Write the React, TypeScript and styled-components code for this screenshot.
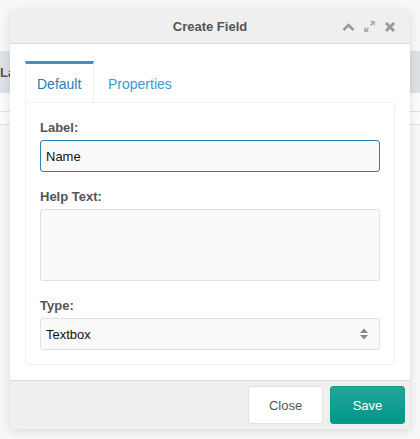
import React from 'react'
import styled, { createGlobalStyle } from 'styled-components'

const GlobalStyle = createGlobalStyle`
  html, body {
    margin: 0;
    padding: 0;
    background: #f7f7f7;
    font-family: "Liberation Sans", Arial, sans-serif;
  }
  * { box-sizing: border-box; }
`

const Page = styled.div`
  position: relative;
  width: 420px;
  height: 439px;
  overflow: hidden;
  background: #f7f7f7;
`

const BackTable = styled.div`
  padding-top: 51px;
  display: flex;
  flex-direction: column;
`

const BackHeader = styled.div`
  height: 42px;
  background: #dde1e5;
  display: flex;
  align-items: center;
  font-size: 13px;
  font-weight: bold;
  color: #555;
`

const BackRow = styled.div<{ $h: number }>`
  height: ${(p) => p.$h}px;
  background: #fbfbfb;
  border-bottom: 1px solid #e2e2e2;
`

const Dialog = styled.div`
  position: absolute;
  left: 10px;
  top: 10px;
  width: 400px;
  background: #fff;
  border-radius: 3px;
  box-shadow: 0 2px 10px rgba(0, 0, 0, 0.12);
  display: flex;
  flex-direction: column;
  overflow: hidden;
`

const Header = styled.div`
  height: 34px;
  flex: none;
  background: #efefef;
  border-bottom: 1px solid #dcdcdc;
  position: relative;
  display: flex;
  align-items: center;
  justify-content: center;
`

const Title = styled.div`
  font-size: 13px;
  font-weight: bold;
  color: #555;
`

const HeaderIcons = styled.div`
  position: absolute;
  right: 14px;
  top: 0;
  height: 100%;
  display: flex;
  align-items: center;
  gap: 8px;
`

const Body = styled.div`
  padding: 17px 15px 15px 15px;
  display: flex;
  flex-direction: column;
`

const Tabs = styled.div`
  display: flex;
  height: 41px;
`

const Tab = styled.div<{ $active?: boolean }>`
  display: flex;
  align-items: center;
  padding-top: 2px;
  font-size: 14px;
  color: ${(p) => (p.$active ? '#2b7fb6' : '#3c9ad3')};
  background: ${(p) => (p.$active ? '#fff' : 'transparent')};
  border-top: 3px solid ${(p) => (p.$active ? '#3996c8' : 'transparent')};
  border-left: 1px solid ${(p) => (p.$active ? '#f0f0f0' : 'transparent')};
  border-right: 1px solid ${(p) => (p.$active ? '#f0f0f0' : 'transparent')};
  width: ${(p) => (p.$active ? '69px' : 'auto')};
  padding-left: ${(p) => (p.$active ? '11px' : '13px')};
`

const Panel = styled.div`
  border: 1px solid #f0f0f0;
  border-radius: 0 4px 4px 4px;
  padding: 17px 14px 14px 14px;
  display: flex;
  flex-direction: column;
`

const FieldLabel = styled.div<{ $top?: number }>`
  font-size: 13px;
  line-height: 15px;
  font-weight: bold;
  color: #555;
  margin-top: ${(p) => p.$top ?? 0}px;
  margin-bottom: 5px;
`

const TextInput = styled.div<{ $focus?: boolean }>`
  height: 32px;
  background: #fafafa;
  border: 1px solid ${(p) => (p.$focus ? '#2f82b8' : '#e0e0e0')};
  border-radius: 3px;
  font-size: 13px;
  color: #111;
  display: flex;
  align-items: center;
  padding-left: 5px;
`

const TextArea = styled.div`
  height: 72px;
  background: #fafafa;
  border: 1px solid #e0e0e0;
  border-radius: 3px;
`

const Select = styled(TextInput)`
  justify-content: space-between;
  padding-right: 10px;
`

const Footer = styled.div`
  height: 49px;
  flex: none;
  background: #efefef;
  border-top: 1px solid #dcdcdc;
  display: flex;
  justify-content: flex-end;
  align-items: center;
  gap: 7px;
  padding-right: 5px;
`

const Button = styled.div<{ $primary?: boolean }>`
  width: 75px;
  height: 38px;
  border-radius: 3px;
  display: flex;
  align-items: center;
  justify-content: center;
  font-size: 13px;
  color: ${(p) => (p.$primary ? '#fff' : '#555')};
  background: ${(p) =>
    p.$primary ? 'linear-gradient(#26a697, #00968a)' : '#fff'};
  border: 1px solid ${(p) => (p.$primary ? '#0e9a8c' : '#e2e2e2')};
`

const ChevronUp = () => (
  <svg width="13" height="12" viewBox="0 0 13 12">
    <path d="M1.5 9 L6.5 4 L11.5 9" fill="none" stroke="#999" strokeWidth="2.6" />
  </svg>
)

const Expand = () => (
  <svg width="13" height="13" viewBox="0 0 12 12">
    <path d="M6.5 1 H11 V5.5 Z M1 6.5 V11 H5.5 Z" fill="#aaa" />
    <path d="M9.5 2.5 L7 5 M2.5 9.5 L5 7" stroke="#aaa" strokeWidth="1.6" />
  </svg>
)

const CloseX = () => (
  <svg width="12" height="12" viewBox="0 0 12 12">
    <path d="M2 2 L10 10 M10 2 L2 10" stroke="#999" strokeWidth="2.8" />
  </svg>
)

const UpDown = () => (
  <svg width="10" height="14" viewBox="0 0 10 14">
    <path d="M1 6 L5 1.5 L9 6 Z" fill="#888" />
    <path d="M1 8 L5 12.5 L9 8 Z" fill="#888" />
  </svg>
)

export default function App() {
  return (
    <Page>
      <GlobalStyle />
      <BackTable>
        <BackHeader>La</BackHeader>
        <BackRow $h={19} />
        <BackRow $h={13} />
      </BackTable>
      <Dialog>
        <Header>
          <Title>Create Field</Title>
          <HeaderIcons>
            <ChevronUp />
            <Expand />
            <CloseX />
          </HeaderIcons>
        </Header>
        <Body>
          <Tabs>
            <Tab $active>Default</Tab>
            <Tab>Properties</Tab>
          </Tabs>
          <Panel>
            <FieldLabel>Label:</FieldLabel>
            <TextInput $focus>Name</TextInput>
            <FieldLabel $top={17}>Help Text:</FieldLabel>
            <TextArea />
            <FieldLabel $top={17}>Type:</FieldLabel>
            <Select>
              <span>Textbox</span>
              <UpDown />
            </Select>
          </Panel>
        </Body>
        <Footer>
          <Button>Close</Button>
          <Button $primary>Save</Button>
        </Footer>
      </Dialog>
    </Page>
  )
}
